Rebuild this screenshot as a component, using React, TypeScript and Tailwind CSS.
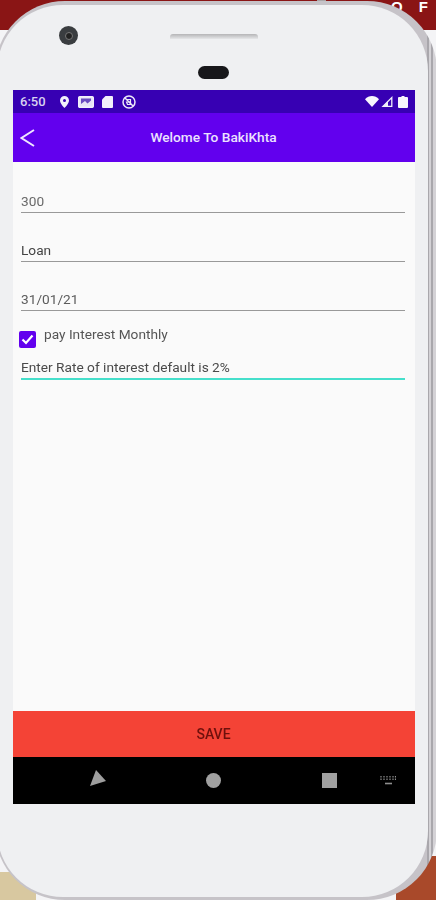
export default function App() {
  return (
    <div className="relative h-[900px] w-[436px] overflow-hidden bg-[#f4f4f6] font-['Roboto',sans-serif]">
      {/* what shows behind the phone */}
      <div className="absolute inset-x-0 top-0 flex h-[30px] justify-end bg-[#8a1515] pr-[2px] font-['Liberation_Sans',sans-serif] text-[15px] font-bold leading-[14px] tracking-[6px] text-white">
        O F
      </div>
      <div className="absolute bottom-0 left-0 h-[28px] w-[36px] bg-[#d8c8a0]" />
      <div className="absolute bottom-0 right-0 h-[44px] w-[40px] bg-[#a9492a]" />
      <div className="absolute left-[317px] top-0 h-[5px] w-[9px] bg-[#a8a6a8]" />

      <div className="relative -ml-[5px] mt-[1px] box-border h-[899px] w-[442px] rounded-[70px] bg-[linear-gradient(90deg,#c6c3c8_0px,#c6c3c8_432px,#a9a7ac_432px,#a9a7ac_434px,#d4d2d6_434px,#d4d2d6_436px,#a9a7ac_436px,#a9a7ac_438px,#d4d2d6_438px)] pb-[3px] pl-[2px] pr-[9px] pt-[4px] blur-[0.6px]">
        <div className="relative flex h-full flex-col rounded-[66px] bg-[#eff0f2]">
          {/* top bezel */}
          <div className="relative flex h-[85px] shrink-0 flex-col items-center pl-[2px] pt-[29px]">
            <div className="absolute left-[62px] top-[21px] flex h-[19px] w-[19px] items-center justify-center rounded-full bg-[#3a3d40]">
              <div className="h-[8px] w-[8px] rounded-full border border-[#777] bg-[#222]" />
            </div>
            <div className="h-[5px] w-[88px] rounded-t-[3px] bg-gradient-to-b from-[#b5b5b7] to-[#e6e7e9]" />
            <div className="mt-[27px] h-[13px] w-[31px] rounded-full bg-[#17171a]" />
          </div>

          {/* screen */}
          <div className="ml-[16px] flex h-[714px] w-[402px] shrink-0 flex-col bg-[#fafafa]">
            <div className="flex h-[23px] shrink-0 items-center bg-[#3700b3] pl-[7px] pr-[7px] text-[#d8d2f0]">
              <span className="w-[33px] text-[13px] font-medium leading-none">6:50</span>
              <div className="flex items-center pl-[7px]">
                <svg width="9" height="12" viewBox="0 0 9 12">
                  <path fill="#f2f0fb" fillRule="evenodd" d="M4.5 0A4.5 4.5 0 0 0 0 4.5C0 7.5 4.5 12 4.5 12S9 7.500 9 4.500A4.500 4.500 0 0 0 4.500 0Zm0 3a1.500 1.500 0 1 1 0 3 1.500 1.500 0 0 1 0-3Z" />
                </svg>
                <svg className="ml-[9px]" width="16" height="12" viewBox="0 0 16 12">
                  <rect x="0.700" y="0.700" width="14.600" height="10.600" rx="1" fill="#e8e4f6" stroke="#f2f0fb" strokeWidth="1.400" />
                  <path fill="#6a4cc0" d="M3 2.500h10v2L9.500 7.500 7 5 3 8Z" />
                </svg>
                <svg className="ml-[8px]" width="11" height="12" viewBox="0 0 11 12">
                  <path fill="#f2f0fb" d="M3.500 0H10a1 1 0 0 1 1 1v10a1 1 0 0 1-1 1H1a1 1 0 0 1-1-1V3.500Z" />
                </svg>
                <svg className="ml-[9px]" width="14" height="14" viewBox="0 0 14 14" fill="none" stroke="#ece9f8">
                  <circle cx="7" cy="7" r="6" strokeWidth="1.500" />
                  <path d="M3 3l8 8" strokeWidth="1.500" />
                  <path d="M5 4.500h3.500v2M4.500 7h4v2.500h-3Z" strokeWidth="1.200" />
                </svg>
              </div>
              <div className="ml-auto flex items-center gap-[2px]">
                <svg width="14" height="11" viewBox="0 0 14 11">
                  <path fill="#f7f6fd" d="M0 3.200C2 1.200 4.400 0 7 0s5 1.200 7 3.200L7 11Z" />
                </svg>
                <svg width="12" height="11" viewBox="0 0 12 11">
                  <path fill="none" stroke="#f0eefa" strokeWidth="1.300" d="M10.800 1.600v8.700H2Z" />
                  <path fill="#f0eefa" d="M7 5v5.500H2Z" />
                </svg>
                <svg className="ml-[3px]" width="10" height="12" viewBox="0 0 10 12">
                  <path fill="#f7f6fd" d="M3.500 0h3v1H9a1 1 0 0 1 1 1v9a1 1 0 0 1-1 1H1a1 1 0 0 1-1-1V2a1 1 0 0 1 1-1h2.500Z" />
                </svg>
              </div>
            </div>

            <div className="relative flex h-[49px] shrink-0 items-center justify-center bg-[#6200ee] pr-[1px] text-[13.7px] font-medium text-[#ece2ff]">
              <svg className="absolute left-[7px] top-[16px]" width="15" height="18" viewBox="0 0 15 18" fill="none" stroke="#efe6ff" strokeWidth="2">
                <path d="M14 1 1.500 9 14 17" />
              </svg>
              Welome To BakiKhta
            </div>

            <div className="flex flex-1 flex-col pl-[8px] pr-[10px] text-[13.7px] text-[#555]">
              <div className="mt-[32px] h-[19px] border-b-[1.500px] border-[#999] leading-[14px] text-[#6a6a6a]">300</div>
              <div className="mt-[30px] h-[19px] border-b-[1.500px] border-[#999] leading-[14px] text-[#444]">Loan</div>
              <div className="mt-[30px] h-[19px] border-b-[1.500px] border-[#999] leading-[14px] text-[#5c5c5c]">31/01/21</div>
              <div className="mt-[15px] flex h-[24px] items-start">
                <div className="-ml-[2px] mt-[5px] flex h-[17px] w-[17px] shrink-0 items-center justify-center rounded-[2px] bg-[#6200ee]">
                  <svg width="13" height="11" viewBox="0 0 13 11" fill="none" stroke="#fff" strokeWidth="2.200">
                    <path d="M1.500 5.500 5 9l6.500-7.500" />
                  </svg>
                </div>
                <span className="ml-[8px] leading-[16px]">pay Interest Monthly</span>
              </div>
              <div className="mt-[8px] h-[22px] border-b-2 border-[#45dfcb] leading-[18px] text-[#4a4a4a]">Enter Rate of interest default is 2%</div>
            </div>

            <div className="flex h-[46px] shrink-0 items-center justify-center bg-[#f44336] pr-[1px] text-[14px] font-medium text-[#6e100c]">SAVE</div>

            <div className="relative flex h-[47px] shrink-0 items-center justify-center bg-black">
              <svg className="absolute left-[77px] top-[13px]" width="17" height="17" viewBox="0 0 17 17">
                <path fill="#9e9e9e" d="M6 0 16 11 0 16Z" />
              </svg>
              <div className="-ml-[2px] h-[15px] w-[15px] rounded-full bg-[#a0a0a0]" />
              <div className="absolute left-[309px] top-[16px] h-[15px] w-[15px] bg-[#a0a0a0]" />
              <svg className="absolute left-[367px] top-[18px]" width="16" height="10" viewBox="0 0 16 10" fill="none" stroke="#8f8f8f" strokeWidth="1.200">
                <path d="M1 1v4M4 1v4M7 1v4M10 1v4M13 1v4M15.500 1v4" strokeDasharray="1.500 1" />
                <path d="M5 8.500h7" strokeWidth="1.600" />
              </svg>
            </div>
          </div>
        </div>
      </div>
    </div>
  );
}
